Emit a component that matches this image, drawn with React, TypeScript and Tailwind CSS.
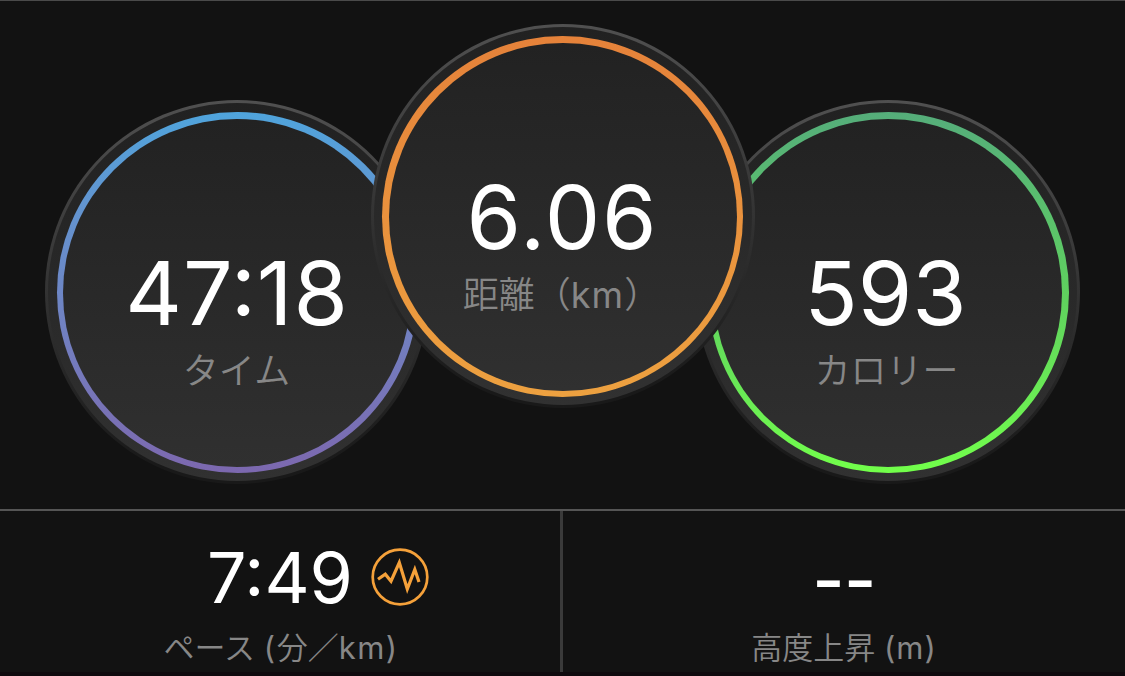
import type { ReactNode } from "react";

type DialProps = {
  value: ReactNode;
  label: ReactNode;
  ring: string;
  className?: string;
  valueClass?: string;
  labelClass?: string;
};

function Dial({ value, label, ring, className = "", valueClass = "", labelClass = "" }: DialProps) {
  return (
    <div className={`h-96 w-96 shrink-0 rounded-full bg-linear-to-b from-[#505050] via-[#333333] via-50% to-[#191919] to-95% p-[3px] ${className}`}>
      <div className="h-full w-full rounded-full bg-linear-to-b from-[#212121] to-[#313131] px-[8.5px] pt-[9px] pb-2">
        <div className={`h-full w-full rounded-full bg-linear-to-b p-[6.5px] ${ring}`}>
          <div className="flex h-full w-full flex-col items-center rounded-full bg-linear-to-b from-[#222222] to-[#303030] pt-[130.5px] whitespace-nowrap">
            <div className={`text-[88px] leading-[88px] font-[370] text-white [font-feature-settings:'calt'_1] ${valueClass}`}>{value}</div>
            <div className={`mt-4 text-[36px] leading-[36px] font-[350] text-[#878787] ${labelClass}`}>{label}</div>
          </div>
        </div>
      </div>
    </div>
  );
}

function PaceIcon() {
  return (
    <svg className="h-[58px] w-[58px]" viewBox="0 0 58 58" fill="none" stroke="#f5a13a">
      <circle cx="29" cy="29" r="27.3" strokeWidth="2.7" />
      <path d="M7 31.3 14.3 26.2 20 33.2 28.3 14.5 36.3 41 43.8 21.5 48 34" strokeWidth="3.2" strokeMiterlimit="10" />
    </svg>
  );
}

export default function App() {
  return (
    <main className="flex h-[676px] w-[1125px] flex-col overflow-hidden border-t border-[#4a4a4a] bg-[#121212] font-['Inter','Noto_Sans_CJK_JP',sans-serif]">
      <section className="flex h-[508px] items-start justify-center pt-[23px]">
        <Dial value="47:18" label="タイム" ring="from-[#4fa4dc] to-[#7c68af]" className="mt-[76px]" valueClass="tracking-[0.8px]" labelClass="pr-px" />
        <Dial
          value="6.06"
          label={<>距離（<span className="font-[380] tracking-[1.2px]">km</span>）</>}
          ring="from-[#e5823a] to-[#eda140]"
          className="z-10 -mx-[58.5px]"
          valueClass="tracking-[1.8px]"
          labelClass="pr-0.5"
        />
        <Dial value="593" label="カロリー" ring="from-[#55ad7a] via-[#5fd05e] via-50% to-[#72ff4a]" className="mt-[76px]" valueClass="pr-[5px]" labelClass="pr-[3px]" />
      </section>
      <section className="flex h-[163px] border-t-2 border-[#555555]">
        <div className="flex w-[563px] flex-col items-center border-r-[3px] border-[#3a3a3a] pt-8">
          <div className="flex items-center pl-[76px]">
            <span className="text-[70px] leading-[70px] font-[380] text-white">7:49</span>
            <span className="-mt-0.5 ml-[18px]"><PaceIcon /></span>
          </div>
          <div className="mt-[19px] pl-0.5 text-[31px] leading-[31px] font-[350] text-[#878787]">
            ペース <span className="font-[380] tracking-[1.8px]">(</span>分／<span className="font-[380] tracking-[1.4px]">km)</span>
          </div>
        </div>
        <div className="flex flex-1 flex-col items-center pt-[34px]">
          <div className="text-[70px] leading-[70px] font-[550] tracking-[-0.5px] text-white">--</div>
          <div className="mt-[17px] text-[31px] leading-[31px] font-[350] text-[#878787]">
            高度上昇 <span className="font-[380] tracking-[1px]">(m)</span>
          </div>
        </div>
      </section>
      <div className="h-1 bg-[#0f0a0e]" />
    </main>
  );
}
